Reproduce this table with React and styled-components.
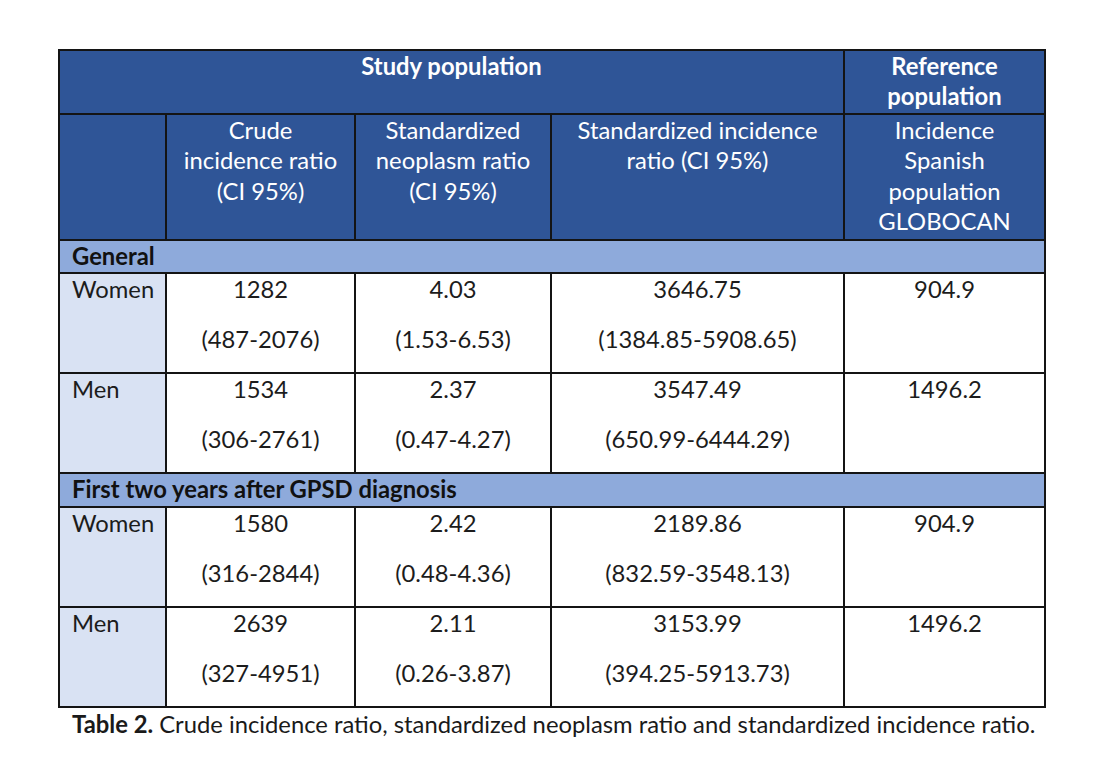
import React from "react";
import styled, { createGlobalStyle } from "styled-components";

const GlobalStyle = createGlobalStyle`
  html, body {
    margin: 0;
    padding: 0;
    background: #ffffff;
  }
  body {
    font-family: Lato, "Open Sans", "Liberation Sans", sans-serif;
    color: #1c1c1c;
  }
`;

const Page = styled.div`
  width: 1099px;
  height: 770px;
  padding: 49px 0 0 58px;
  box-sizing: border-box;
`;

const Table = styled.table`
  border-collapse: collapse;
  table-layout: fixed;
  width: 986px;
  font-size: 23.8px;
  line-height: 30.4px;
`;

const HeadRow = styled.tr`
  height: ${(p) => p.h}px;
`;

const HeadCell = styled.th`
  background: #2f5597;
  color: #ffffff;
  font-weight: ${(p) => (p.bold ? 700 : 400)};
  text-align: center;
  vertical-align: top;
  border: 2px solid #141414;
  padding: 0 16px;
`;

const GroupCell = styled.td`
  background: #8eaadb;
  color: #111;
  font-weight: 700;
  text-align: left;
  vertical-align: top;
  border: 2px solid #141414;
  padding: 0 12px;
  height: ${(p) => p.h}px;
  box-sizing: border-box;
`;

const LabelCell = styled.td`
  background: #d9e2f3;
  text-align: left;
  vertical-align: top;
  border: 2px solid #141414;
  padding: 0 12px;
`;

const ValueCell = styled.td`
  background: #ffffff;
  text-align: center;
  vertical-align: top;
  border: 2px solid #141414;
  padding: 0 6px;
`;

const Line = styled.div`
  & + & {
    margin-top: 19.5px;
  }
`;

const DataRow = styled.tr`
  height: 100px;
`;

const Caption = styled.p`
  margin: 1px 0 0 14px;
  font-size: 23.8px;
  line-height: 30px;
  color: #1a1a1a;
  strong {
    font-weight: 700;
  }
`;

const groups = [
  {
    title: "General",
    rows: [
      ["Women", ["1282", "(487-2076)"], ["4.03", "(1.53-6.53)"], ["3646.75", "(1384.85-5908.65)"], "904.9"],
      ["Men", ["1534", "(306-2761)"], ["2.37", "(0.47-4.27)"], ["3547.49", "(650.99-6444.29)"], "1496.2"],
    ],
  },
  {
    title: "First two years after GPSD diagnosis",
    rows: [
      ["Women", ["1580", "(316-2844)"], ["2.42", "(0.48-4.36)"], ["2189.86", "(832.59-3548.13)"], "904.9"],
      ["Men", ["2639", "(327-4951)"], ["2.11", "(0.26-3.87)"], ["3153.99", "(394.25-5913.73)"], "1496.2"],
    ],
  },
];

function Values({ lines }) {
  return (
    <ValueCell>
      {lines.map((l) => (
        <Line key={l}>{l}</Line>
      ))}
    </ValueCell>
  );
}

export default function App() {
  return (
    <Page>
      <GlobalStyle />
      <Table>
        <colgroup>
          <col style={{ width: 107 }} />
          <col style={{ width: 189 }} />
          <col style={{ width: 196 }} />
          <col style={{ width: 293 }} />
          <col style={{ width: 201 }} />
        </colgroup>
        <thead>
          <HeadRow h={64}>
            <HeadCell bold colSpan={4}>Study population</HeadCell>
            <HeadCell bold>Reference population</HeadCell>
          </HeadRow>
          <HeadRow h={126}>
            <HeadCell />
            <HeadCell>Crude incidence ratio (CI 95%)</HeadCell>
            <HeadCell>Standardized neoplasm ratio (CI 95%)</HeadCell>
            <HeadCell>Standardized incidence ratio (CI 95%)</HeadCell>
            <HeadCell>Incidence Spanish population GLOBOCAN</HeadCell>
          </HeadRow>
        </thead>
        {groups.map((g) => (
          <tbody key={g.title}>
            <tr>
              <GroupCell colSpan={5} h={g.title === "General" ? 33 : 34}>
                {g.title}
              </GroupCell>
            </tr>
            {g.rows.map(([label, a, b, c, ref]) => (
              <DataRow key={label}>
                <LabelCell>{label}</LabelCell>
                <Values lines={a} />
                <Values lines={b} />
                <Values lines={c} />
                <Values lines={[ref]} />
              </DataRow>
            ))}
          </tbody>
        ))}
      </Table>
      <Caption>
        <strong>Table 2.</strong> Crude incidence ratio, standardized neoplasm ratio and standardized incidence ratio.
      </Caption>
    </Page>
  );
}
